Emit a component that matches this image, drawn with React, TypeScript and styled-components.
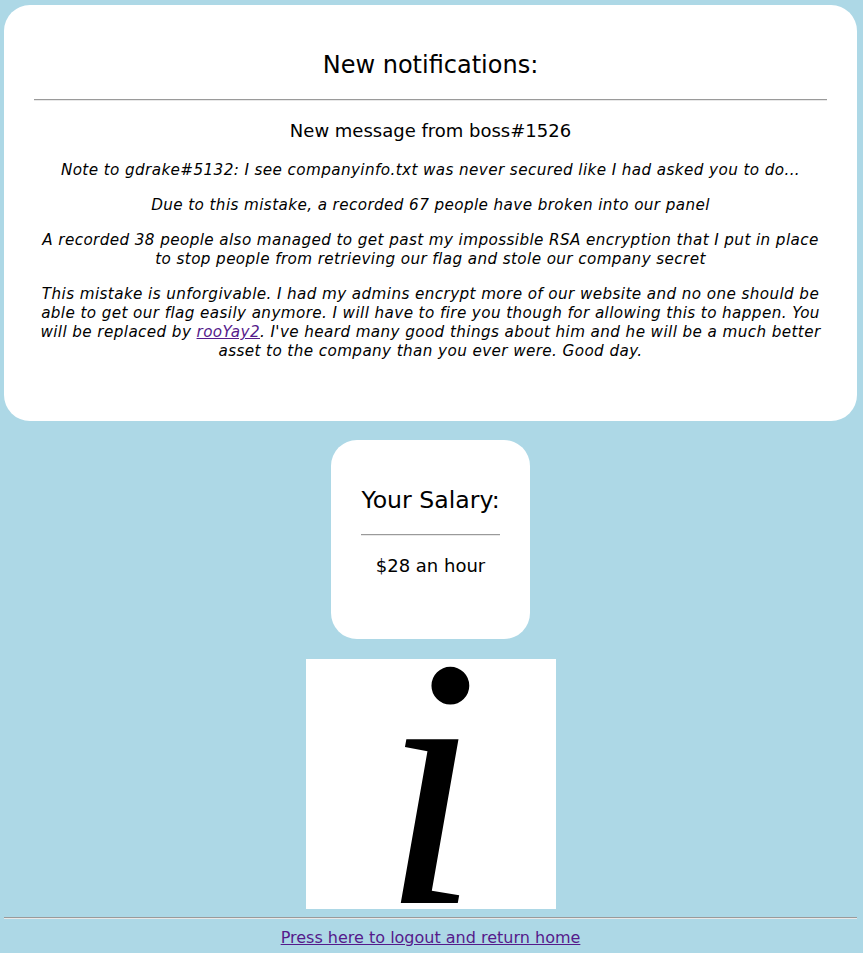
import React from "react";
import styled, { createGlobalStyle } from "styled-components";

const Global = createGlobalStyle`
  html, body { margin: 0; padding: 0; background: #add8e6; }
  body { font-family: "DejaVu Sans", "Noto Sans", sans-serif; color: #000; }
`;

const Page = styled.div`
  display: flex;
  flex-direction: column;
  align-items: center;
  padding: 5px 6px 0 4px;
`;

const Card = styled.section`
  background: #fff;
  border-radius: 26px;
  box-sizing: border-box;
  text-align: center;
  align-self: stretch;
  padding: 45px 30px 60px;
`;

const Title = styled.h2`
  margin: 0;
  font-size: 24px;
  font-weight: 400;
  line-height: 30px;
  white-space: nowrap;
`;

const Rule = styled.hr<{ $m: string }>`
  border: none;
  border-top: 1px solid #9a9a9a;
  border-bottom: 1px solid #e8e8e8;
  margin: ${(p) => p.$m};
`;

const Sub = styled.h3`
  margin: 0 0 19px;
  font-size: 18px;
  font-weight: 400;
  line-height: 22px;
`;

const Para = styled.p`
  margin: 0 0 16px;
  font-style: italic;
  font-size: 15.2px;
  letter-spacing: 0.4px;
  line-height: 19px;
  &:last-child { margin-bottom: 0; }
`;

const Link = styled.a`
  color: #551a8b;
  text-decoration: underline;
`;

const SalaryCard = styled.section`
  margin-top: 19px;
  width: 199px;
  height: 199px;
  box-sizing: border-box;
  background: #fff;
  border-radius: 26px;
  padding: 45px 30px 0;
  text-align: center;
  display: flex;
  flex-direction: column;
  align-items: stretch;
`;

const SalaryTitle = styled(Title)`
  font-size: 23.6px;
  margin: 0 -10px;
`;

const Amount = styled.div`
  font-size: 18px;
  line-height: 22px;
`;

const Logo = styled.div`
  margin-top: 20px;
  width: 250px;
  height: 250px;
  background: #fff;
  display: flex;
  justify-content: center;
  align-items: flex-end;
  overflow: hidden;
`;

const LogoGlyph = styled.span`
  font-family: "Liberation Serif", serif;
  font-style: italic;
  font-size: 357px;
  line-height: 1;
  margin-bottom: -52px;
  color: #000;
`;

const Footer = styled.footer`
  align-self: stretch;
  margin-top: 8px;
  text-align: center;
`;

const FooterLink = styled.a`
  display: inline-block;
  margin-top: 9px;
  font-size: 16px;
  color: #551a8b;
  text-decoration: underline;
`;

export default function App() {
  return (
    <>
      <Global />
      <Page>
        <Card>
          <Title>New notifications:</Title>
          <Rule $m="19px 0 19px" />
          <Sub>New message from boss#1526</Sub>
          <Para>
            Note to gdrake#5132: I see companyinfo.txt was never secured like I had asked you to do...
          </Para>
          <Para>Due to this mistake, a recorded 67 people have broken into our panel</Para>
          <Para>
            A recorded 38 people also managed to get past my impossible RSA encryption that I put in place to stop people from retrieving our flag and stole our company secret
          </Para>
          <Para>
            This mistake is unforgivable. I had my admins encrypt more of our website and no one should be able to get our flag easily anymore. I will have to fire you though for allowing this to happen. You will be replaced by{" "}
            <Link href="#">rooYay2</Link>. I've heard many good things about him and he will be a much better asset to the company than you ever were. Good day.
          </Para>
        </Card>
        <SalaryCard>
          <SalaryTitle>Your Salary:</SalaryTitle>
          <Rule $m="19px 0 19px" />
          <Amount>$28 an hour</Amount>
        </SalaryCard>
        <Logo>
          <LogoGlyph>i</LogoGlyph>
        </Logo>
        <Footer>
          <Rule $m="0" />
          <FooterLink href="#">Press here to logout and return home</FooterLink>
        </Footer>
      </Page>
    </>
  );
}
